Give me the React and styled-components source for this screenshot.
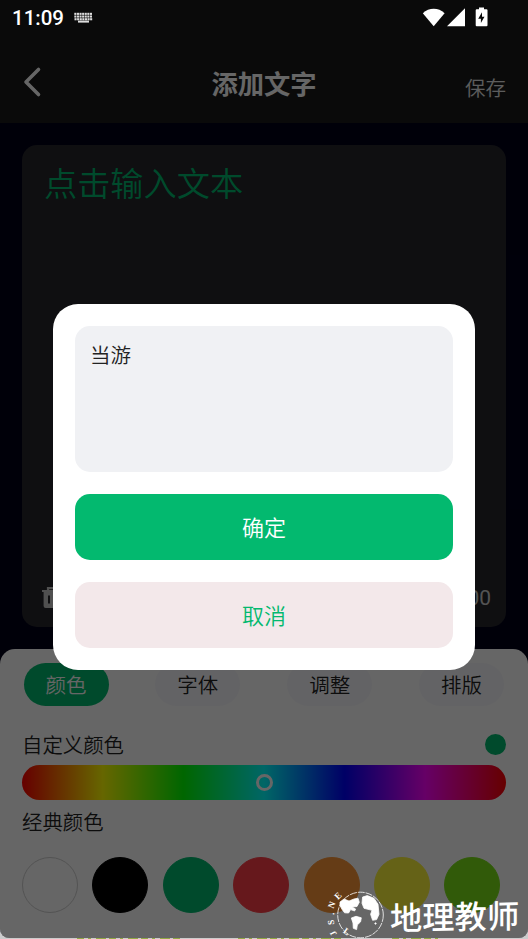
import React from "react";
import styled, { createGlobalStyle } from "styled-components";

const GlobalStyle = createGlobalStyle`
  * {
    box-sizing: border-box;
  }
  body {
    margin: 0;
    overflow: hidden;
    font-family: Roboto, "Noto Sans CJK SC", sans-serif;
    font-weight: 350;
  }
  button, textarea {
    font-family: inherit;
    font-weight: inherit;
    border: 0;
    padding: 0;
  }
`;

const Page = styled.div`
  position: relative;
  width: 528px;
  height: 939px;
  overflow: hidden;
  background-color: #ccc;
`;

const Screen = styled.div`
  position: relative;
  height: 937.5px;
  display: flex;
  flex-direction: column;
  overflow: hidden;
  border-radius: 0 0 9px 9px;
  background-color: #000018;
`;

const StatusBar = styled.div`
  position: absolute;
  z-index: 3;
  top: 0;
  left: 0;
  width: 100%;
  height: 36px;
  display: flex;
  justify-content: space-between;
  padding: 0 40px 0 12px;
  color: white;
`;

const StatusGroup = styled.div`
  display: flex;
  align-items: center;
  height: 36px;
`;

const Clock = styled.span`
  width: 62px;
  font-size: 20.5px;
  font-weight: 500;
  line-height: 36px;
`;

const Header = styled.header`
  flex: none;
  height: 123px;
  padding: 46px 22px 0;
  display: grid;
  grid-template-columns: 60px 1fr 60px;
  align-items: start;
  background-color: #191919;
  color: white;
`;

const BackButton = styled.button`
  display: flex;
  margin-top: 20px;
  background: none;
`;

const Title = styled.h1`
  margin: 19px 0 0;
  font-size: 26.3px;
  font-weight: 700;
  line-height: 40px;
  text-align: center;
`;

const SaveButton = styled.button`
  margin-top: 28px;
  background: none;
  color: #e8e8e8;
  font-size: 20.5px;
  line-height: 30px;
  text-align: right;
  white-space: nowrap;
`;

const Canvas = styled.section`
  flex: none;
  height: 482px;
  margin: 22px 22px 21.5px;
  padding: 16px 15px 13px 22px;
  display: flex;
  flex-direction: column;
  justify-content: space-between;
  border-radius: 15px;
  background-color: #26262c;
`;

const Hint = styled.div`
  color: #00b96e;
  font-size: 33.2px;
  line-height: 48px;
`;

const CanvasFooter = styled.div`
  display: flex;
  align-items: center;
  justify-content: space-between;
  height: 32px;
  margin-left: -3px;
  color: #d0d0d0;
  font-size: 21px;
  font-weight: 400;
`;

const Sheet = styled.section`
  flex: none;
  height: 289px;
  padding: 14.5px 22px 0;
  border-radius: 15px 15px 0 0;
  background-color: white;
`;

const Tabs = styled.nav`
  display: flex;
  justify-content: space-between;
  padding: 0 2px 0 1.5px;
`;

const Tab = styled.button`
  width: 85px;
  height: 43px;
  padding-top: 3px;
  border-radius: 22px;
  background-color: ${props => (props.$active ? "#00b96e" : "#f8f8fc")};
  color: ${props => (props.$active ? "white" : "#222")};
  font-size: 20.5px;
  line-height: 40px;
`;

const Label = styled.div`
  height: ${props => props.$height}px;
  padding-top: ${props => props.$top || 0}px;
  display: flex;
  align-items: center;
  justify-content: space-between;
  color: #222;
  font-size: 20.4px;
`;

const CurrentColor = styled.span`
  width: 21px;
  height: 21px;
  border-radius: 50%;
  background-color: #00b96e;
`;

const HueBar = styled.div`
  height: 34.5px;
  display: flex;
  align-items: center;
  justify-content: center;
  border-radius: 18px;
  background: linear-gradient(to right, #f00, #ff0, #0f0, #0ff, #00f, #f0f, #f00);
`;

const HueThumb = styled.span`
  width: 17px;
  height: 17px;
  border: 3px solid white;
  border-radius: 50%;
`;

const Swatches = styled.div`
  display: flex;
  gap: 14.4px;
  margin-top: 14px;
`;

const Swatch = styled.span`
  flex: none;
  width: 56px;
  height: 56px;
  border: 1px solid ${props => props.$border || props.$color};
  border-radius: 50%;
  background-color: ${props => props.$color};
`;

const BottomEdge = styled.svg`
  display: block;
`;

const Overlay = styled.div`
  position: absolute;
  z-index: 1;
  inset: 0;
  display: flex;
  justify-content: center;
  align-items: flex-start;
  padding-top: 304px;
  background-color: rgba(0, 0, 0, 0.6);
`;

const Dialog = styled.div`
  width: 422px;
  height: 366.4px;
  padding: 22px;
  display: flex;
  flex-direction: column;
  gap: 22px;
  border-radius: 25px;
  background-color: white;
`;

const TextInput = styled.textarea`
  display: block;
  flex: none;
  height: 146.4px;
  padding: 15px 15px;
  resize: none;
  outline: none;
  border-radius: 15px;
  background-color: #f0f1f4;
  color: #222;
  font-size: 20.5px;
  line-height: 30px;
`;

const DialogButton = styled.button`
  flex: none;
  height: 66px;
  padding-top: 4px;
  border-radius: 15px;
  background-color: ${props => (props.$primary ? "#03b96f" : "#f3e8ea")};
  color: ${props => (props.$primary ? "white" : "#03b96f")};
  font-size: 22px;
  line-height: 62px;
`;

const Watermark = styled.div`
  position: absolute;
  z-index: 2;
  right: 9px;
  bottom: 0;
  display: flex;
  align-items: flex-start;
  height: 52px;
  color: white;
  font-family: "Noto Sans CJK SC", sans-serif;
  font-size: 32.3px;
  font-weight: 500;
  line-height: 56px;
`;

const WatermarkText = styled.span`
  transform: skewY(-1deg);
`;

const KeyboardIcon = () => (
  <svg width="19" height="12" viewBox="0 0 19 12" fill="#ddd">
    {[0, 3, 6].map((y, row) =>
      [0, 1, 2, 3, 4, 5, 6].map(i => (
        <rect key={`${y}-${i}`} x={i * 2.6 + (row === 2 ? 0.5 : 0.3)} y={y * 0.9 + 0.8} width="2.1" height="2.1" />
      ))
    )}
    <rect x="4" y="8.6" width="11" height="2" />
  </svg>
);

const BackIcon = () => (
  <svg width="20" height="32" viewBox="0 0 20 32">
    <path d="M16.5 3.5 4 16l12.5 12.5" fill="none" stroke="white" strokeWidth="3.6" strokeLinecap="round" strokeLinejoin="round" />
  </svg>
);

const SignalIcons = () => (
  <svg width="66" height="22" viewBox="0 0 66 22" fill="white">
    <path d="M.8 6.2C7 .3 16.4.3 22.6 6.2L11.7 19.3Z" />
    <path d="M25 19.3 43 1.3v18Z" />
    <path d="M54.5 2.2h2.5V.5h5v1.7h2.5a1 1 0 0 1 1 1V18.3a1 1 0 0 1-1 1h-9.8a1 1 0 0 1-1-1V3.2a1 1 0 0 1 1-1Z" />
    <path d="m60 5.3-3.8 6.4h2.7V16l3.6-6.2H60Z" fill="#0a0a0a" />
  </svg>
);

const TrashIcon = () => (
  <svg width="22" height="24" viewBox="0 0 22 24">
    <path d="M1 5h20M7 4.5V2.2h8v2.3" fill="none" stroke="#c8c8c8" strokeWidth="2.2" />
    <path d="M2.6 5h16.8v15a2 2 0 0 1-2 2H4.6a2 2 0 0 1-2-2Z" fill="#c8c8c8" />
    <path d="M8 9.5v8M14 9.5v8" stroke="#26262c" strokeWidth="2" />
  </svg>
);

const GlobeLogo = () => (
  <svg width="63" height="52" viewBox="0 0 63 52">
    <circle cx="33.5" cy="28" r="22.8" fill="none" stroke="white" strokeWidth="0.8" strokeDasharray="7 1" />
    <g fill="white" stroke="white" strokeWidth="0.8" strokeLinejoin="round">
      <path d="M13 15 17 12l5 2 5-2 4-.8 1.3 4L30 19.5l-5 .5 3.6 2-1 2-4-1.4-2 3.4-4-.2-2.3-3L13 18.6Z" />
      <path d="m24.3 31 4.7-1.7 5.3 1.5-.7 4-3.3 3.2-.7 4.6-3.3-1.3L26 36Z" />
      <path d="m35.6 10 4.7-1.4 6.7 2.7 4 6 1 10-2.4 5.3-4 .7-2-6 1.4-4-8-2-2-5Z" />
      <circle cx="48.5" cy="36.5" r="0.7" />
    </g>
    <g fill="white" fontFamily="Liberation Serif, serif" fontWeight="700" fontSize="9" textAnchor="middle">
      <text transform="translate(18 47) rotate(35)">L</text>
      <text transform="translate(9 45) rotate(-118)">J</text>
      <text transform="translate(7 35) rotate(-97)">S</text>
      <text transform="translate(7 27) rotate(-85)">.</text>
      <text transform="translate(7.5 19) rotate(-68)">N</text>
      <text transform="translate(13 11) rotate(-45)">E</text>
    </g>
  </svg>
);

const tabs = ["颜色", "字体", "调整", "排版"];

const swatches = ["#ffffff", "#000000", "#00b96e", "#ff3e46", "#fd9737", "#fdf43b", "#7be217"];

export default () => (
  <>
    <GlobalStyle />
    <Page>
      <Screen>
        <StatusBar>
          <StatusGroup>
            <Clock>11:09</Clock>
            <KeyboardIcon />
          </StatusGroup>
          <StatusGroup>
            <SignalIcons />
          </StatusGroup>
        </StatusBar>
        <Header>
          <BackButton>
            <BackIcon />
          </BackButton>
          <Title>添加文字</Title>
          <SaveButton>保存</SaveButton>
        </Header>
        <Canvas>
          <Hint>点击输入文本</Hint>
          <CanvasFooter>
            <TrashIcon />
            <span>0/100</span>
          </CanvasFooter>
        </Canvas>
        <Sheet>
          <Tabs>
            {tabs.map((tab, i) => (
              <Tab key={tab} $active={i === 0}>
                {tab}
              </Tab>
            ))}
          </Tabs>
          <Label $height={59} $top={17.5}>
            自定义颜色
            <CurrentColor />
          </Label>
          <HueBar>
            <HueThumb />
          </HueBar>
          <Label $height={43.5}>经典颜色</Label>
          <Swatches>
            {swatches.map(color => (
              <Swatch key={color} $color={color} $border={color === "#ffffff" ? "#cfcfcf" : null} />
            ))}
          </Swatches>
        </Sheet>
        <Overlay>
          <Dialog>
            <TextInput defaultValue="当游" spellCheck={false} />
            <DialogButton $primary>确定</DialogButton>
            <DialogButton>取消</DialogButton>
          </Dialog>
        </Overlay>
      </Screen>
      <BottomEdge width="528" height="2">
        <path d="M77 1h105M238 1h106M392 1h50" stroke="#92a944" strokeWidth="2" strokeDasharray="7 4 3 5 10 3" />
      </BottomEdge>
      <Watermark>
        <GlobeLogo />
        <WatermarkText>地理教师</WatermarkText>
      </Watermark>
    </Page>
  </>
);
